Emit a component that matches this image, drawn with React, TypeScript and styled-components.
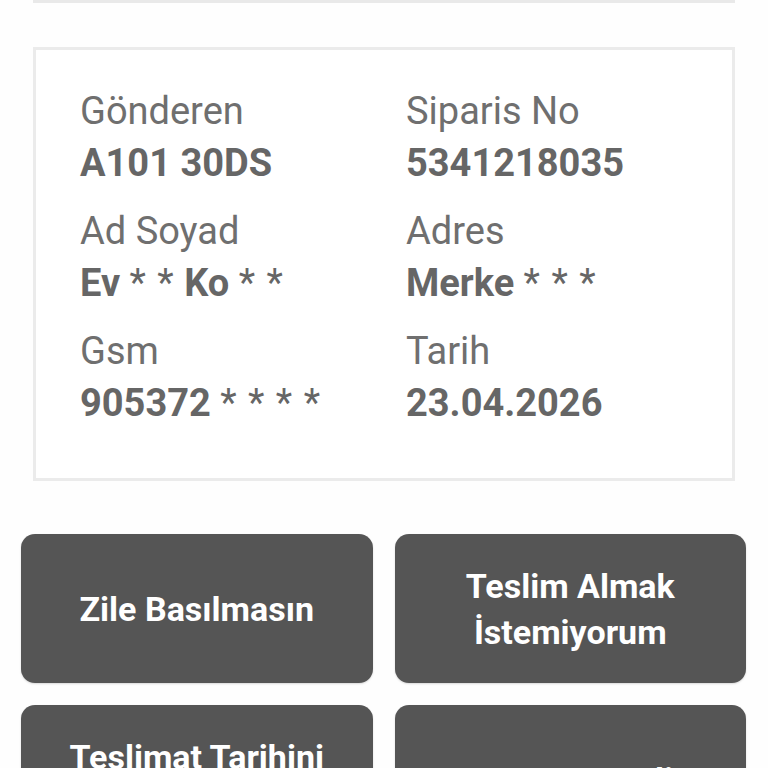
import React from "react";
import styled, { createGlobalStyle } from "styled-components";

const Global = createGlobalStyle`
  html, body { margin: 0; padding: 0; background: #ffffff; }
  body { font-family: Roboto, "Noto Sans", "Liberation Sans", sans-serif; }
  * { box-sizing: border-box; }
`;

const Page = styled.div`
  width: 768px;
  height: 768px;
  overflow: hidden;
  background: #fefefe;
  display: flex;
  flex-direction: column;
`;

const PrevCardEdge = styled.div`
  margin: 0 33px;
  height: 3px;
  background: #e9e9e9;
  flex: none;
`;

const InfoCard = styled.section`
  margin: 44px 33px 0;
  border: 3px solid #ebebeb;
  background: #ffffff;
  padding: 39px 0 53px 44px;
  display: grid;
  grid-template-columns: 326px 1fr;
  row-gap: 24px;
  flex: none;
`;

const Field = styled.div`
  display: flex;
  flex-direction: column;
  gap: 8px;
`;

const Label = styled.div`
  font-size: 38px;
  line-height: 44px;
  color: #6f6f6f;
  font-weight: 400;
  white-space: nowrap;
`;

const Value = styled.div`
  font-size: 38px;
  line-height: 44px;
  color: #666666;
  font-weight: 700;
  white-space: nowrap;
`;

const Mask = styled.span`
  font-weight: 400;
  letter-spacing: 1px;
`;

const ButtonGrid = styled.div`
  margin: 53px 22px 0 21px;
  display: grid;
  grid-template-columns: 1fr 1fr;
  gap: 22px;
`;

const ActionButton = styled.button`
  height: 149px;
  border: none;
  border-radius: 14px;
  background: #555555;
  color: #ffffff;
  font-family: Roboto, "Noto Sans", "Liberation Sans", sans-serif;
  font-weight: 700;
  font-size: 34px;
  line-height: 46px;
  padding: 0 20px;
  display: flex;
  align-items: center;
  justify-content: center;
  text-align: center;
  box-shadow: 0 1px 2px rgba(0, 0, 0, 0.15);
`;

const fields: { label: string; value: React.ReactNode }[] = [
  { label: "Gönderen", value: "A101 30DS" },
  { label: "Siparis No", value: "5341218035" },
  {
    label: "Ad Soyad",
    value: (
      <>
        Ev <Mask>* *</Mask> Ko <Mask>* *</Mask>
      </>
    ),
  },
  {
    label: "Adres",
    value: (
      <>
        Merke <Mask>* * *</Mask>
      </>
    ),
  },
  {
    label: "Gsm",
    value: (
      <>
        905372 <Mask>* * * *</Mask>
      </>
    ),
  },
  { label: "Tarih", value: "23.04.2026" },
];

const actions = [
  "Zile Basılmasın",
  "Teslim Almak İstemiyorum",
  "Teslimat Tarihini Değiştir",
  "Komşuma Teslim",
];

export default function App() {
  return (
    <Page>
      <Global />
      <PrevCardEdge />
      <InfoCard>
        {fields.map((f) => (
          <Field key={f.label}>
            <Label>{f.label}</Label>
            <Value>{f.value}</Value>
          </Field>
        ))}
      </InfoCard>
      <ButtonGrid>
        {actions.map((a) => (
          <ActionButton key={a}>{a}</ActionButton>
        ))}
      </ButtonGrid>
    </Page>
  );
}
